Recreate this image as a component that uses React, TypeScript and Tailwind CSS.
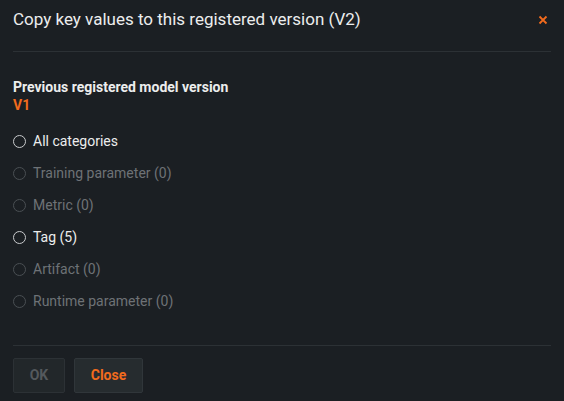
import React from "react";

const items = [
  { label: "All categories", enabled: true },
  { label: "Training parameter (0)", enabled: false },
  { label: "Metric (0)", enabled: false },
  { label: "Tag (5)", enabled: true },
  { label: "Artifact (0)", enabled: false },
  { label: "Runtime parameter (0)", enabled: false },
];

export default function App() {
  return (
    <div
      className="w-[564px] h-[401px] bg-[#1b1f23] text-[#e6e7e8] overflow-hidden flex flex-col px-[13px]"
      style={{ fontFamily: "Roboto, 'Liberation Sans', sans-serif" }}
    >
      <div className="flex items-center justify-between h-[38px] pt-[1px]">
        <div className="text-[17px] leading-none text-[#eceded]">
          Copy key values to this registered version (V2)
        </div>
        <svg width="10" height="10" viewBox="0 0 10 10" className="mr-[3px]">
          <path d="M1.5 1.5 L8.5 8.5 M8.5 1.5 L1.5 8.5" stroke="#f26b1d" strokeWidth="1.8" />
        </svg>
      </div>
      <div className="h-px bg-[#2c3135] mt-[13px]" />
      <div className="pt-[26px] flex flex-col">
        <div className="text-[14px] font-bold leading-[18px] text-[#eceded]">
          Previous registered model version
        </div>
        <div className="text-[14px] font-bold leading-[18px] text-[#f26b1d]">V1</div>
        <div className="flex flex-col mt-[11px]">
          {items.map((it) => (
            <div key={it.label} className="flex items-center h-[32px] gap-[7px]">
              <span
                className={
                  "w-[13px] h-[13px] rounded-full border " +
                  (it.enabled ? "border-[#c9cbcd]" : "border-[#4a4f53]")
                }
              />
              <span
                className={
                  "text-[14px] " + (it.enabled ? "text-[#eceded]" : "text-[#6e7276]")
                }
              >
                {it.label}
              </span>
            </div>
          ))}
        </div>
      </div>
      <div className="h-px bg-[#2c3135] mt-[28px]" />
      <div className="flex gap-[9px] mt-[12px]">
        <button className="w-[52px] h-[35px] rounded-[2px] bg-[#22272a] border border-[#2c3135] text-[14px] font-bold text-[#54595d]">
          OK
        </button>
        <button className="w-[69px] h-[35px] rounded-[2px] bg-[#262c2f] border border-[#30363a] text-[14px] font-bold text-[#f26b1d]">
          Close
        </button>
      </div>
    </div>
  );
}
